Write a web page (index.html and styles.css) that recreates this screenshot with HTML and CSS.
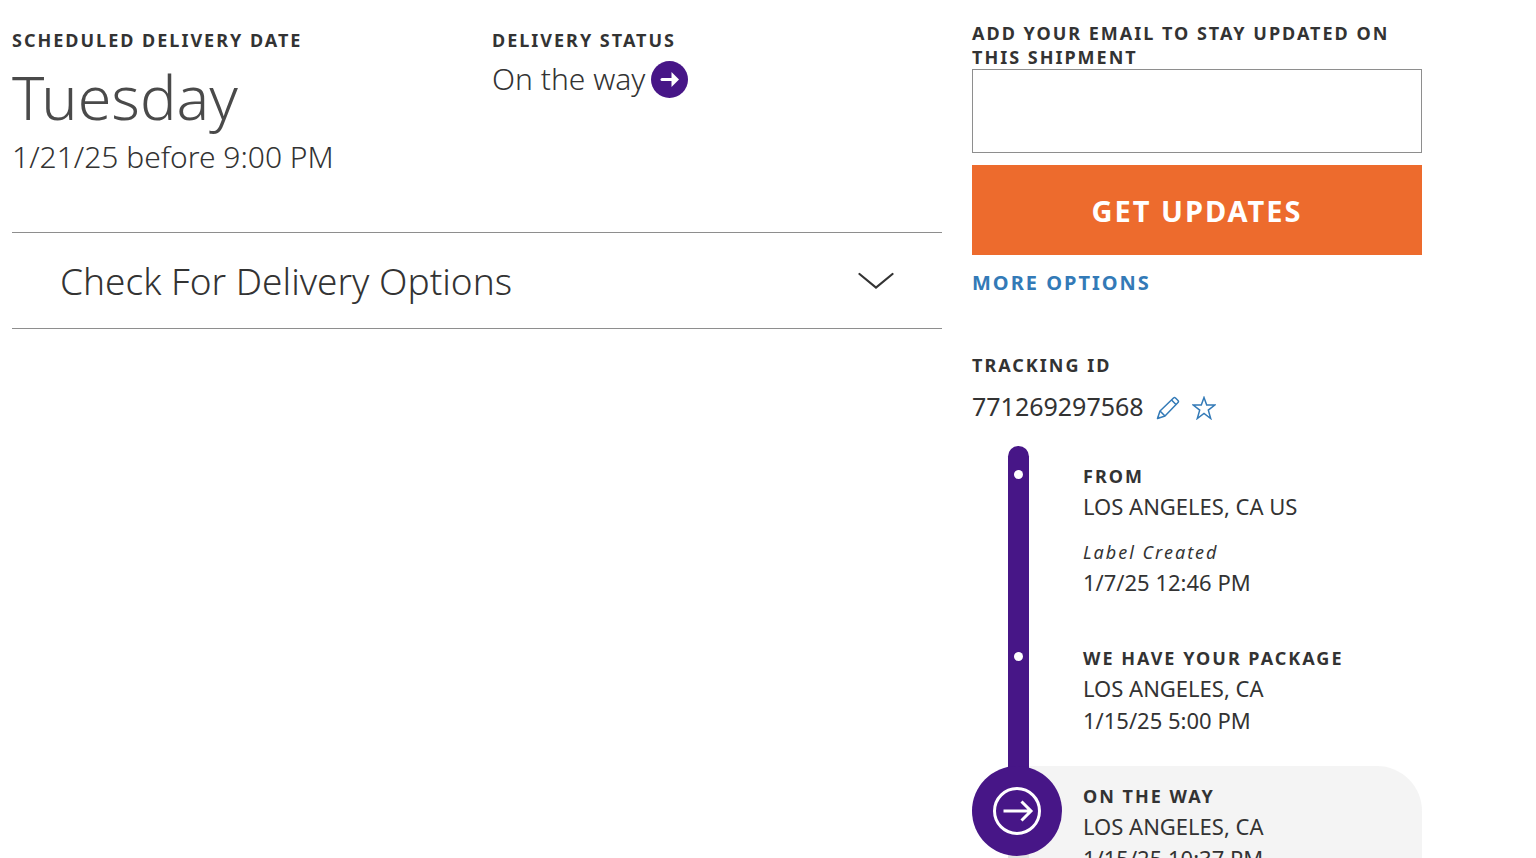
FILE: index.html
```
<!DOCTYPE html>
<html lang="en">
<head>
    <meta charset="UTF-8">
    <meta name="viewport" content="width=device-width, initial-scale=1.0">
    <title>Shipment Tracking</title>
    <link rel="stylesheet" href="styles.css">
</head>
<body>

    <div class="container">
        <main class="shipment">
            <div class="summary">
                <section>
                    <h2 class="label">Scheduled delivery date</h2>
                    <div class="delivery-day">Tuesday</div>
                    <div class="delivery-time">1/21/25 before 9:00 PM</div>
                </section>
                <section>
                    <h2 class="label">Delivery status</h2>
                    <div class="delivery-status">
                        <span>On the way</span>
                        <svg class="status-icon" width="37" height="37" viewBox="0 0 37 37" aria-hidden="true">
                            <circle cx="18.5" cy="18.5" r="18.5" fill="#471687"/>
                            <path d="M11 18.5h11" stroke="#fff" stroke-width="3" stroke-linecap="round"/>
                            <path d="M20.5 11l7.500 7.500-7.500 7.500z" fill="#fff"/>
                        </svg>
                    </div>
                </section>
            </div>

            <button class="options-toggle" type="button" aria-expanded="false">
                <span>Check For Delivery Options</span>
                <svg width="36" height="18" viewBox="0 0 36 18" fill="none" aria-hidden="true">
                    <path d="M1.5 2L18 15.500L34.500 2" stroke="#333" stroke-width="2.200" stroke-linecap="round"/>
                </svg>
            </button>
        </main>

        <aside class="sidebar">
            <form class="updates">
                <label class="label" for="email">Add your email to stay updated on this shipment</label>
                <input class="email-input" type="email" id="email" name="email">
                <button class="updates-button" type="button">Get updates</button>
                <a class="more-options" href="#">More options</a>
            </form>

            <h2 class="label">Tracking ID</h2>
            <div class="tracking-id">
                <span>771269297568</span>
                <button class="icon-button" type="button" aria-label="Edit nickname">
                    <svg width="24" height="24" viewBox="0 0 24 24" fill="none" stroke="#337ab7" stroke-width="1.5" stroke-linejoin="round">
                        <path d="M1.500 22.500L4 15L17.500 2Q18.500 1.200 19.500 2L22 4.500Q23 5.500 22 6.500L9 20Z"/>
                        <path d="M4 15L9 20M15.500 4L20 8.500M2 20.500L3.500 22"/>
                    </svg>
                </button>
                <button class="icon-button" type="button" aria-label="Add to watch list">
                    <svg width="24" height="24" viewBox="0 0 24 24" fill="none" stroke="#337ab7" stroke-width="1.5">
                        <path d="M12 1.500L14.700 9H22.800L16.300 14.100L18.700 22.500L12 17.500L5.300 22.500L7.700 14.100L1.200 9H9.300Z"/>
                    </svg>
                </button>
            </div>

            <ol class="timeline">
                <li class="stop">
                    <div class="track track-start"><span class="dot"></span></div>
                    <div class="stop-details">
                        <h3 class="label">From</h3>
                        <div>LOS ANGELES, CA US</div>
                        <div class="stop-event">Label Created</div>
                        <div>1/7/25 12:46 PM</div>
                    </div>
                </li>
                <li class="stop">
                    <div class="track"><span class="dot"></span></div>
                    <div class="stop-details">
                        <h3 class="label">We have your package</h3>
                        <div>LOS ANGELES, CA</div>
                        <div class="stop-time">1/15/25 5:00 PM</div>
                    </div>
                </li>
                <li class="stop current">
                    <div class="track track-ahead"></div>
                    <svg class="current-icon" width="90" height="90" viewBox="0 0 90 90" fill="none" aria-hidden="true">
                        <circle cx="45" cy="45" r="45" fill="#471687"/>
                        <circle cx="45" cy="45" r="22.500" stroke="#fff" stroke-width="3"/>
                        <path d="M31.500 45H58M49.500 35.500L59 45L49.500 54.500" stroke="#fff" stroke-width="3"/>
                    </svg>
                    <div class="stop-details">
                        <h3 class="label">On the way</h3>
                        <div>LOS ANGELES, CA</div>
                        <div class="stop-time">1/15/25 10:37 PM</div>
                    </div>
                </li>
            </ol>
        </aside>
    </div>

</body>
</html>
```
FILE: styles.css
```
* {
    box-sizing: border-box;
}

body {
    font-family: "Noto Sans", "Open Sans", sans-serif;
    margin: 0;
    color: #333;
    background-color: #fff;
}

.container {
    display: grid;
    grid-template-columns: 31fr 15fr;
    gap: 30px;
    padding: 21px 114px 0 12px;
}

.label {
    margin: 0;
    font-size: 18px;
    font-weight: 700;
    line-height: 24px;
    letter-spacing: 2px;
    text-transform: uppercase;
}

/* Delivery summary */
.summary {
    display: grid;
    grid-template-columns: 1fr 1fr;
    gap: 30px;
    padding: 7px 0 56px;
}

.delivery-day {
    font-size: 61px;
    font-weight: 300;
    line-height: 83px;
    margin-top: 3px;
    color: #4a4a4a;
}

.delivery-time,
.delivery-status {
    font-size: 30px;
    font-weight: 300;
    line-height: 38px;
}

.delivery-status {
    display: flex;
    align-items: center;
    gap: 6px;
    margin-top: 8px;
}

.options-toggle {
    display: flex;
    justify-content: space-between;
    align-items: center;
    width: 100%;
    height: 97px;
    padding: 0 48px;
    border: solid #8e8e8e;
    border-width: 1px 0;
    background: none;
    color: #333;
    font-family: inherit;
    font-size: 37px;
    font-weight: 300;
    text-align: left;
    cursor: pointer;
}

/* Sidebar */
.updates {
    display: flex;
    flex-direction: column;
    align-items: flex-start;
    margin-bottom: 56px;
}

.email-input {
    width: 100%;
    height: 84px;
    padding: 0 20px;
    border: 1px solid #8e8e8e;
    font-family: inherit;
    font-size: 24px;
}

.updates-button {
    width: 100%;
    height: 90px;
    margin: 12px 0 14px;
    border: none;
    background-color: #ed6b2d;
    color: #fff;
    font-family: inherit;
    font-size: 29px;
    font-weight: 700;
    letter-spacing: 2px;
    text-transform: uppercase;
    cursor: pointer;
}

.more-options {
    color: #337ab7;
    font-size: 20px;
    font-weight: 700;
    line-height: 28px;
    letter-spacing: 2px;
    text-decoration: none;
    text-transform: uppercase;
}

.tracking-id {
    display: flex;
    align-items: center;
    gap: 12px;
    margin-top: 12px;
    font-size: 25px;
    line-height: 34px;
}

.icon-button {
    display: flex;
    padding: 4px 0 0;
    border: none;
    background: none;
    cursor: pointer;
}

/* Timeline */
.timeline {
    list-style: none;
    margin: 23px 0 0;
    padding: 0;
}

.stop {
    position: relative;
    display: grid;
    grid-template-columns: 21px 1fr;
    gap: 54px;
    padding-left: 36px;
}

.track {
    background-color: #471687;
}

.track-start {
    border-radius: 11px 11px 0 0;
}

.track-ahead {
    background: linear-gradient(#471687 45px, #e3e3e3 45px);
}

.dot {
    display: block;
    width: 9px;
    height: 9px;
    margin: 24px auto 0;
    border-radius: 50%;
    background-color: #fff;
}

.stop-details {
    padding: 15px 0 31px;
    font-size: 22px;
    line-height: 30px;
}

.stop-details .label {
    line-height: 30px;
}

.stop-event {
    margin-top: 16px;
    font-size: 18px;
    font-style: italic;
    letter-spacing: 2px;
}

.stop-time {
    margin-top: 2px;
}

.current {
    background: linear-gradient(#f4f4f4, #f4f4f4) 45px 0 no-repeat;
    border-radius: 0 45px 45px 0;
}

/* Sits over the track line */
.current-icon {
    position: absolute;
    top: 0;
    left: 0;
}
```
